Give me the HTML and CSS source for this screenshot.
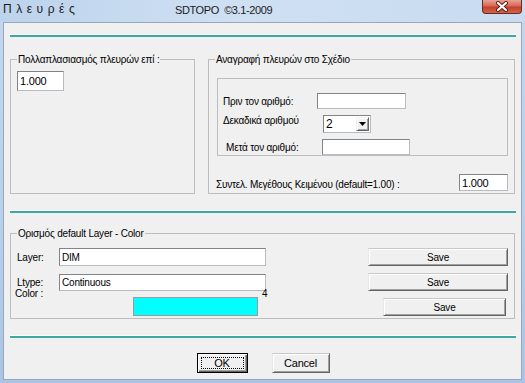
FILE: index.html
```html
<!DOCTYPE html>
<html lang="el">
<head>
    <meta charset="UTF-8">
    <meta name="viewport" content="width=device-width, initial-scale=1.0">
    <title>Πλευρές</title>
    <link rel="stylesheet" href="styles.css">
</head>
<body>
    <div class="window">
        <div class="titlebar">
            <span class="title">Π λ ε υ ρ έ ς</span>
            <span class="app">SDTOPO &nbsp;©3.1-2009</span>
            <button class="close" aria-label="Close">
                <svg width="14" height="11" viewBox="0 0 14 11">
                    <path d="M3 2 L11 9 M11 2 L3 9" stroke="#5a1a10" stroke-width="4" stroke-linecap="round"/>
                    <path d="M3 2 L11 9 M11 2 L3 9" stroke="#fff" stroke-width="2.2" stroke-linecap="round"/>
                </svg>
            </button>
        </div>
        <div class="client">
            <div class="sep"></div>

            <div class="top-row">
                <fieldset class="group g-mult">
                    <legend>Πολλαπλασιασμός πλευρών επί :</legend>
                    <input class="field f-mult" value="1.000">
                </fieldset>

                <fieldset class="group g-draw">
                    <legend>Αναγραφή πλευρών στο Σχέδιο</legend>
                    <div class="inner">
                        <div class="line l-before">
                            <label>Πριν τον αριθμό:</label>
                            <input class="field f-before">
                        </div>
                        <div class="line l-dec">
                            <label>Δεκαδικά αριθμού</label>
                            <div class="combo">
                                <span class="combo-value">2</span>
                                <span class="combo-drop">
                                    <svg width="7" height="4" viewBox="0 0 7 4"><path d="M0 0 H7 L3.5 4 Z" fill="#000"/></svg>
                                </span>
                            </div>
                        </div>
                        <div class="line l-after">
                            <label>Μετά τον αριθμό:</label>
                            <input class="field f-after">
                        </div>
                    </div>
                    <div class="scale">
                        <label>Συντελ. Μεγέθους Κειμένου (default=1.00) :</label>
                        <input class="field f-scale" value="1.000">
                    </div>
                </fieldset>
            </div>

            <div class="sep"></div>

            <fieldset class="group g-layer">
                <legend>Ορισμός default Layer - Color</legend>
                <div class="lrow">
                    <label>Layer:</label>
                    <input class="field f-layer" value="DIM">
                    <button class="btn save">Save</button>
                </div>
                <div class="lrow">
                    <label>Ltype:</label>
                    <input class="field f-ltype" value="Continuous">
                    <button class="btn save">Save</button>
                </div>
                <div class="lrow crow">
                    <span class="color-label">Color :</span>
                    <span class="swatch"></span>
                    <span class="color-num">4</span>
                    <button class="btn save save-3">Save</button>
                </div>
            </fieldset>

            <div class="sep"></div>

            <div class="actions">
                <button class="btn default">OK</button>
                <button class="btn cancel">Cancel</button>
            </div>
        </div>
    </div>
</body>
</html>
```

FILE: styles.css
```css
body {
    margin: 0;
    font-family: "Liberation Sans", Arial, sans-serif;
    font-size: 10px;
    letter-spacing: -0.2px;
    color: #000;
    background: #b9d0ea;
}
.window {
    width: 525px;
    height: 383px;
    display: flex;
    flex-direction: column;
    background: linear-gradient(180deg, #c3d8ef 0%, #b8cfea 60%, #a9c4e4 100%);
}
.titlebar {
    height: 22px;
    display: flex;
    align-items: flex-start;
    padding-left: 3px;
    background: linear-gradient(90deg, #bcd3ec 0%, #cfe0f3 45%, #c8dbf0 100%);
}
.title {
    width: 172px;
    font-size: 12px;
    letter-spacing: 0.6px;
    line-height: 14px;
    padding-top: 2px;
    color: #1a1a1a;
}
.app {
    font-size: 11px;
    letter-spacing: -0.4px;
    line-height: 14px;
    padding-top: 3px;
    color: #1a1a1a;
}
.close {
    margin-left: auto;
    margin-right: 3px;
    width: 40px;
    height: 14px;
    padding: 0;
    border: 1px solid #6b2a1f;
    border-top: none;
    border-radius: 0 0 4px 4px;
    background: linear-gradient(180deg, #e7a394 0%, #d66a55 45%, #c4412c 55%, #d2644c 100%);
    display: flex;
    align-items: center;
    justify-content: center;
}
.client {
    flex: 1;
    margin: 0 3px 3px 3px;
    border: 1px solid #98a7b9;
    background: #f0f0f0;
    padding: 12px 5px 0 6px;
}
.sep {
    height: 2px;
    background: #3fa8a2;
    box-shadow: 0 -1px 0 #ffffff;
}
.top-row + .sep,
.g-layer + .sep {
    margin-top: 17px;
}
.top-row {
    display: flex;
    gap: 13px;
    margin-top: 16px;
}
.group {
    margin: 0;
    box-sizing: border-box;
    border: 1px solid #bdbdbd;
    min-inline-size: 0;
}
.group legend {
    padding: 0 1px;
    line-height: 13px;
}
.g-mult {
    width: 185px;
    height: 141px;
    padding: 5px 6px 0 6px;
}
.g-draw {
    width: 307px;
    height: 141px;
    padding: 12px 6px 0 8px;
}
.g-draw legend {
    margin-left: -2px;
}
.field {
    box-sizing: border-box;
    height: 16px;
    margin: 0;
    padding: 0 2px;
    border: 1px solid;
    border-color: #7f8489 #b7bcc2 #b7bcc2 #7f8489;
    background: #fff;
    font: inherit;
    letter-spacing: inherit;
    color: #000;
}
.f-mult {
    width: 47px;
    height: 20px;
    font-size: 11px;
}
.inner {
    height: 78px;
    box-sizing: border-box;
    border: 1px solid #bdbdbd;
    padding: 14px 0 0 5px;
}
.line {
    display: flex;
    align-items: center;
}
.line + .line {
    margin-top: 6px;
}
.l-before label {
    width: 94px;
}
.f-before {
    width: 89px;
}
.l-dec {
    align-items: flex-start;
}
.l-dec label {
    width: 100px;
    line-height: 13px;
    margin-top: -1px;
}
.l-after label {
    width: 96px;
    margin-left: 3px;
}
.f-after {
    width: 88px;
}
.combo {
    width: 48px;
    height: 18px;
    box-sizing: border-box;
    border: 1px solid;
    border-color: #7f8489 #b7bcc2 #b7bcc2 #7f8489;
    background: #fff;
    display: flex;
    align-items: center;
    padding: 1px;
}
.combo-value {
    flex: 1;
    padding-left: 1px;
    font-size: 12px;
}
.combo-drop {
    width: 13px;
    height: 14px;
    box-sizing: border-box;
    background: #f0f0f0;
    border: 1px solid;
    border-color: #f0f0f0 #646464 #646464 #f0f0f0;
    box-shadow: inset 1px 1px #fff, inset -1px -1px #a0a0a0;
    display: flex;
    align-items: center;
    justify-content: center;
}
.scale {
    display: flex;
    align-items: center;
    justify-content: space-between;
    margin-top: 18px;
}
.scale label {
    margin-left: -1px;
    padding-top: 3px;
}
.f-scale {
    width: 49px;
    height: 17px;
    font-size: 11px;
}
.g-layer {
    width: 505px;
    height: 92px;
    margin-top: 14px;
    padding: 8px 6px 0 6px;
}
.lrow {
    display: flex;
    align-items: center;
}
.lrow + .lrow {
    margin-top: 7px;
}
.lrow label {
    width: 42px;
}
.f-layer {
    width: 207px;
    height: 18px;
}
.f-ltype {
    width: 207px;
    height: 17px;
}
.btn {
    box-sizing: border-box;
    margin: 0;
    padding: 0;
    background: #f0f0f0;
    border: 1px solid;
    border-color: #c8c8c8 #646464 #646464 #e8e8e8;
    box-shadow: inset 1px 1px #fff, inset -1px -1px #a0a0a0;
    font: inherit;
    letter-spacing: inherit;
    color: #000;
}
.save {
    margin-left: auto;
    width: 140px;
    height: 18px;
}
.crow {
    align-items: flex-start;
}
.color-label {
    width: 118px;
    margin-left: -2px;
    margin-top: -9px;
    line-height: 9px;
}
.swatch {
    width: 125px;
    height: 19px;
    box-sizing: border-box;
    border: 1px solid #9a9a9a;
    background: #00ffff;
    margin-top: -1px;
}
.color-num {
    margin-left: 4px;
    margin-top: -9px;
    line-height: 9px;
}
.save-3 {
    width: 123px;
    margin-right: 2px;
}
.actions {
    display: flex;
    justify-content: center;
    gap: 24px;
    margin-top: 15px;
}
.actions .btn {
    height: 20px;
    font-size: 11px;
}
.default {
    width: 51px;
    border: 1px solid #000;
    box-shadow: inset 1px 1px #fff, inset -1px -1px #646464, inset -2px -2px #a0a0a0;
    outline: 1px dotted #000;
    outline-offset: -5px;
}
.cancel {
    width: 58px;
}
```
